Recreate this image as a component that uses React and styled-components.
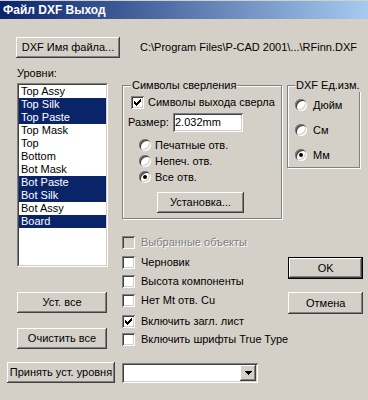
import React from "react";
import styled, { createGlobalStyle } from "styled-components";

const GlobalStyle = createGlobalStyle`
  html, body {
    margin: 0;
    padding: 0;
    background: #d4d0c8;
  }
  body {
    font-family: "Liberation Sans", Arial, sans-serif;
    font-size: 11px;
  }
`;

const raised = `
  box-shadow: inset -1px -1px #404040, inset 1px 1px #fff,
    inset -2px -2px #808080, inset 2px 2px #d4d0c8;
`;

const sunken = `
  box-shadow: inset 1px 1px #808080, inset -1px -1px #fff,
    inset 2px 2px #404040, inset -2px -2px #d4d0c8;
`;

const Window = styled.div`
  width: 368px;
  height: 400px;
  overflow: hidden;
  background: #d4d0c8;
  color: #000;
  font-family: "Liberation Sans", Arial, sans-serif;
  font-size: 11px;
  line-height: 13px;
  display: flex;
  flex-direction: column;
`;

const TitleBar = styled.div`
  margin-top: 1px;
  height: 18px;
  line-height: 18px;
  padding-left: 3px;
  background: linear-gradient(to right, #0a246a, #a6caf0);
  color: #fff;
  font-weight: bold;
  font-size: 12px;
`;

const FileRow = styled.div`
  display: flex;
  align-items: center;
  margin-top: 18px;
  padding-left: 16px;
  gap: 20px;
`;

const Button = styled.button`
  box-sizing: border-box;
  width: ${(p) => p.$w}px;
  height: ${(p) => p.$h || 21}px;
  margin: 0;
  padding: 0;
  font: inherit;
  line-height: 13px;
  color: #000;
  background: #d4d0c8;
  border: ${(p) => (p.$default ? "1px solid #000" : "none")};
  ${raised}
  white-space: nowrap;
  cursor: default;
  flex: none;
`;

const PathText = styled.span`
  white-space: nowrap;
`;

const Main = styled.div`
  display: flex;
`;

const LeftCol = styled.div`
  box-sizing: border-box;
  width: 122px;
  flex: none;
  padding: 9px 0 0 17px;
  display: flex;
  flex-direction: column;
  align-items: flex-start;
`;

const ListFrame = styled.div`
  box-sizing: border-box;
  margin-top: 3px;
  width: 91px;
  height: 184px;
  border: 1px solid;
  border-color: #808080 #fff #fff #808080;
`;

const ListInner = styled.div`
  box-sizing: border-box;
  height: 100%;
  border: 1px solid;
  border-color: #404040 #d4d0c8 #d4d0c8 #404040;
  background: #fff;
`;

const ListItem = styled.div`
  height: 13px;
  line-height: 13px;
  padding-left: 2px;
  white-space: nowrap;
  background: ${(p) => (p.$selected ? "#0a246a" : "transparent")};
  color: ${(p) => (p.$selected ? "#fff" : "#000")};
`;

const LeftButtons = styled.div`
  display: flex;
  flex-direction: column;
  gap: 15px;
  margin-top: 25px;
`;

const RightCol = styled.div`
  flex: 1;
  padding-top: 21px;
  display: flex;
  flex-direction: column;
`;

const GroupsRow = styled.div`
  display: flex;
  align-items: flex-start;
  gap: 5px;
`;

const Group = styled.fieldset`
  box-sizing: border-box;
  width: ${(p) => p.$w}px;
  min-width: 0;
  margin: 0;
  padding: 0 0 ${(p) => p.$pb}px 0;
  border: 1px solid #808080;
  box-shadow: inset 1px 1px #fff, 1px 1px #fff;
`;

const Legend = styled.legend`
  margin-left: ${(p) => p.$ml}px;
  padding: 0 1px;
  line-height: 13px;
  background: #d4d0c8;
  white-space: nowrap;
`;

const Row = styled.div`
  display: flex;
  align-items: center;
  height: ${(p) => p.$h || 13}px;
  margin-top: ${(p) => p.$mt || 0}px;
  margin-left: ${(p) => p.$ml || 0}px;
  white-space: nowrap;
`;

const BoxFrame = styled.span`
  box-sizing: border-box;
  width: 13px;
  height: 13px;
  flex: none;
  display: flex;
  align-items: center;
  justify-content: center;
  background: ${(p) => (p.$disabled ? "#d4d0c8" : "#fff")};
  ${sunken}
`;

const RadioCircle = styled.span`
  position: relative;
  width: 12px;
  height: 12px;
  flex: none;
  border-radius: 50%;
  background: #fff;
  box-shadow: inset 1px 1px #808080, inset -1px -1px #fff,
    inset 2px 2px #404040, inset -2px -2px #d4d0c8;

  &::after {
    content: "";
    position: absolute;
    left: 4px;
    top: 4px;
    width: 4px;
    height: 4px;
    border-radius: 50%;
    background: #000;
    display: ${(p) => (p.$checked ? "block" : "none")};
  }
`;

const Caption = styled.span`
  margin-left: ${(p) => p.$gap}px;
  color: ${(p) => (p.$disabled ? "#808080" : "#000")};
  text-shadow: ${(p) => (p.$disabled ? "1px 1px #fff" : "none")};
`;

const SizeLabel = styled.span`
  width: 45px;
  flex: none;
`;

const Edit = styled.div`
  box-sizing: border-box;
  width: 70px;
  height: 19px;
  line-height: 19px;
  padding-left: 2px;
  background: #fff;
  ${sunken}
`;

const LowerRow = styled.div`
  display: flex;
  margin-top: 16px;
`;

const ChecksCol = styled.div`
  display: flex;
  flex-direction: column;
`;

const ButtonsCol = styled.div`
  margin-left: auto;
  margin-right: 6px;
  padding-top: 22px;
  display: flex;
  flex-direction: column;
  gap: 13px;
`;

const BottomRow = styled.div`
  display: flex;
  align-items: flex-start;
  gap: 7px;
  margin-top: 13px;
  padding-left: 7px;
`;

const Combo = styled.div`
  box-sizing: border-box;
  width: 136px;
  height: 20px;
  margin-top: 1px;
  padding: 2px;
  display: flex;
  justify-content: flex-end;
  background: #fff;
  ${sunken}
`;

const DropButton = styled.span`
  width: 16px;
  height: 16px;
  display: flex;
  align-items: center;
  justify-content: center;
  background: #d4d0c8;
  ${raised}
`;

const CheckMark = () => (
  <svg width="7" height="7" viewBox="0 0 7 7" shapeRendering="crispEdges">
    <path
      d="M0 2h1v3H0zM1 3h1v3H1zM2 4h1v3H2zM3 3h1v3H3zM4 2h1v3H4zM5 1h1v3H5zM6 0h1v3H6z"
      fill="#000"
    />
  </svg>
);

const Check = ({ label, checked, disabled, gap = 5, mt, ml }) => (
  <Row $mt={mt} $ml={ml}>
    <BoxFrame $disabled={disabled}>{checked && <CheckMark />}</BoxFrame>
    <Caption $gap={gap} $disabled={disabled}>
      {label}
    </Caption>
  </Row>
);

const Radio = ({ label, checked, gap, mt, ml }) => (
  <Row $h={16} $mt={mt} $ml={ml}>
    <RadioCircle $checked={checked} />
    <Caption $gap={gap}>{label}</Caption>
  </Row>
);

const layers = [
  { name: "Top Assy", on: false },
  { name: "Top Silk", on: true },
  { name: "Top Paste", on: true },
  { name: "Top Mask", on: false },
  { name: "Top", on: false },
  { name: "Bottom", on: false },
  { name: "Bot Mask", on: false },
  { name: "Bot Paste", on: true },
  { name: "Bot Silk", on: true },
  { name: "Bot Assy", on: false },
  { name: "Board", on: true },
];

const options = [
  { label: "Выбранные объекты", disabled: true, mt: 1 },
  { label: "Черновик", mt: 7 },
  { label: "Высота компоненты", mt: 6 },
  { label: "Нет Mt отв. Cu", mt: 6 },
  { label: "Включить загл. лист", checked: true, mt: 8 },
  { label: "Включить шрифты True Type", mt: 5 },
];

export default function App() {
  return (
    <Window>
      <GlobalStyle />
      <TitleBar>Файл DXF Выход</TitleBar>

      <FileRow>
        <Button $w={104}>DXF Имя файла...</Button>
        <PathText>C:\Program Files\P-CAD 2001\...\RFinn.DXF</PathText>
      </FileRow>

      <Main>
        <LeftCol>
          <span>Уровни:</span>
          <ListFrame>
            <ListInner>
              {layers.map((l) => (
                <ListItem key={l.name} $selected={l.on}>
                  {l.name}
                </ListItem>
              ))}
            </ListInner>
          </ListFrame>
          <LeftButtons>
            <Button $w={90}>Уст. все</Button>
            <Button $w={90}>Очистить все</Button>
          </LeftButtons>
        </LeftCol>

        <RightCol>
          <GroupsRow>
            <Group $w={160} $pb={5}>
              <Legend $ml={8}>Символы сверления</Legend>
              <Check label="Символы выхода сверла" checked mt={4} ml={8} gap={4} />
              <Row $h={19} $mt={4} $ml={5}>
                <SizeLabel>Размер:</SizeLabel>
                <Edit>2.032mm</Edit>
              </Row>
              <Radio label="Печатные отв." mt={5} ml={16} gap={4} />
              <Radio label="Непеч. отв." ml={16} gap={4} />
              <Radio label="Все отв." checked ml={16} gap={4} />
              <Row $h={21} $mt={7} $ml={34}>
                <Button $w={87}>Установка...</Button>
              </Row>
            </Group>

            <Group $w={73} $pb={4}>
              <Legend $ml={7}>DXF Ед.изм.</Legend>
              <Radio label="Дюйм" mt={5} ml={7} gap={6} />
              <Radio label="См" mt={9} ml={7} gap={6} />
              <Radio label="Мм" checked mt={9} ml={7} gap={6} />
            </Group>
          </GroupsRow>

          <LowerRow>
            <ChecksCol>
              {options.map((o) => (
                <Check
                  key={o.label}
                  label={o.label}
                  checked={o.checked}
                  disabled={o.disabled}
                  mt={o.mt}
                  gap={6}
                />
              ))}
            </ChecksCol>
            <ButtonsCol>
              <Button $w={75} $h={22} $default>
                OK
              </Button>
              <Button $w={75} $h={22}>
                Отмена
              </Button>
            </ButtonsCol>
          </LowerRow>
        </RightCol>
      </Main>

      <BottomRow>
        <Button $w={108}>Принять уст. уровня</Button>
        <Combo>
          <DropButton>
            <svg width="7" height="4" viewBox="0 0 7 4" shapeRendering="crispEdges">
              <path d="M0 0h7v1H0zM1 1h5v1H1zM2 2h3v1H2zM3 3h1v1H3z" fill="#000" />
            </svg>
          </DropButton>
        </Combo>
      </BottomRow>
    </Window>
  );
}
